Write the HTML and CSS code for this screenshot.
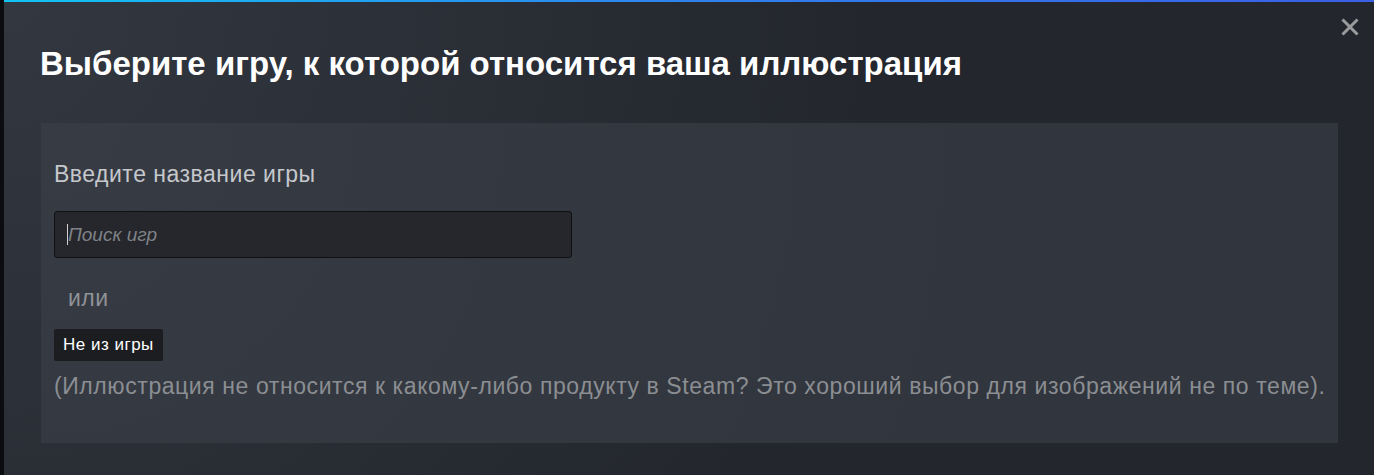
FILE: index.html
```html
<!DOCTYPE html>
<html lang="ru">
<head>
<meta charset="utf-8">
<link rel="stylesheet" href="styles.css">
</head>
<body>
<div class="page">
  <div class="modal">
    <div class="top-border"></div>
    <button class="close" aria-label="Закрыть">
      <svg width="20" height="20" viewBox="0 0 20 20"><path d="M2.5 2.5 L17.5 17.5 M17.5 2.5 L2.5 17.5" stroke="#9a9b9d" stroke-width="3" stroke-linecap="butt"/></svg>
    </button>
    <h1 class="title">Выберите игру, к которой относится ваша иллюстрация</h1>
    <div class="panel">
      <div class="label">Введите название игры</div>
      <div class="search"><span class="caret"></span><span class="placeholder">Поиск игр</span></div>
      <div class="or">или</div>
      <div class="btn">Не из игры</div>
      <div class="note">(Иллюстрация не относится к какому-либо продукту в Steam? Это хороший выбор для изображений не по теме).</div>
    </div>
  </div>
</div>
</body>
</html>
```

FILE: styles.css
```css
html, body {
  margin: 0;
  padding: 0;
  height: 100%;
  background: #0b0c0f;
  overflow: hidden;
}
.page {
  display: flex;
  height: 475px;
  padding-left: 4px;
  font-family: "Liberation Sans", Arial, sans-serif;
}
.modal {
  flex: 1;
  position: relative;
  background: radial-gradient(circle at top left, rgba(74, 81, 92, 0.4) 0%, rgba(75, 81, 92, 0) 60%), #23262d;
  padding: 0 36px 0 37px;
}
.top-border {
  height: 2px;
  margin: 0 -36px 0 -37px;
  background: linear-gradient(to right, #11c3f3, #2f82ee 50%, #3a5fe6);
}
.close {
  position: absolute;
  top: 17px;
  right: 14px;
  width: 20px;
  height: 20px;
  padding: 0;
  border: 0;
  background: none;
  display: flex;
}
.title {
  margin: 42px 0 0 -1px;
  font-size: 33px;
  line-height: 40px;
  font-weight: bold;
  color: #ffffff;
}
.panel {
  margin-top: 39px;
  height: 320px;
  box-sizing: border-box;
  background: radial-gradient(circle at top left, rgba(60, 65, 75, 0.5) 0%, rgba(60, 65, 75, 0) 70%), #31353d;
  padding: 37px 12px 0 13px;
}
.label {
  font-size: 23px;
  line-height: 28px;
  letter-spacing: 0.5px;
  color: #c6c8cc;
}
.search {
  margin-top: 23px;
  width: 518px;
  height: 47px;
  box-sizing: border-box;
  border: 1px solid #0f1012;
  border-radius: 3px;
  background: #25272c;
  display: flex;
  align-items: center;
  padding-left: 12px;
}
.caret {
  width: 1px;
  height: 21px;
  background: #d0d0d0;
}
.placeholder {
  font-size: 19px;
  font-style: italic;
  color: #7f8287;
}
.or {
  margin-top: 26px;
  padding-left: 14px;
  font-size: 23px;
  line-height: 28px;
  letter-spacing: 0.5px;
  color: #8f9296;
}
.btn {
  margin-top: 17px;
  display: inline-block;
  height: 32px;
  box-sizing: border-box;
  padding: 0 9px;
  line-height: 32px;
  background: #1c1d21;
  border-radius: 2px;
  font-size: 17px;
  letter-spacing: 0.5px;
  color: #ffffff;
}
.note {
  margin-top: 11px;
  font-size: 23px;
  line-height: 28px;
  letter-spacing: 0.58px;
  color: #8b8e92;
}
```
